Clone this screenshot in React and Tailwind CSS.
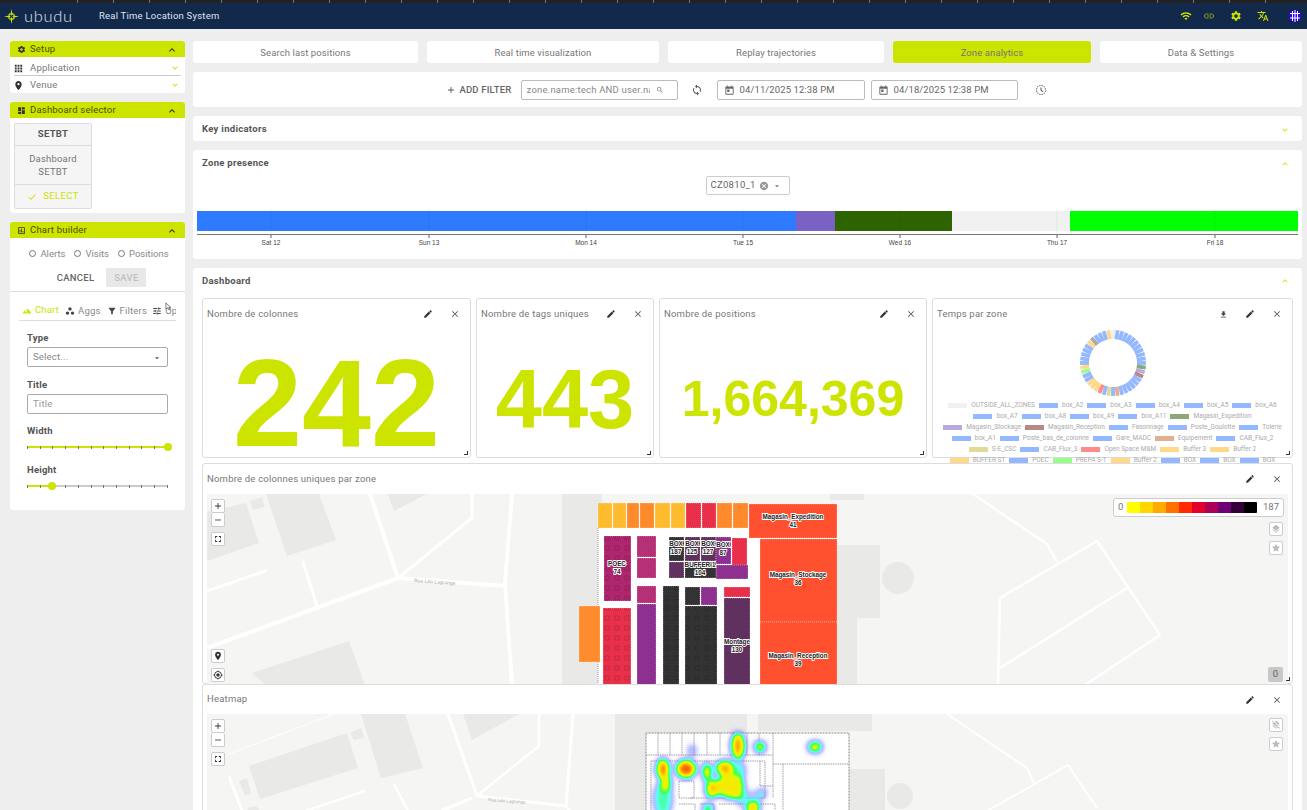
import React from "react";
import {
  MdSettings, MdExpandLess, MdExpandMore, MdApps, MdLocationOn, MdDashboard, MdCheck,
  MdOutlineInsertChart, MdLandscape, MdWorkspaces, MdFilterAlt, MdTune, MdArrowDropDown,
  MdAdd, MdRemove, MdSearch, MdSync, MdToday, MdHistoryToggleOff, MdCancel, MdEdit, MdClose,
  MdFileDownload, MdFullscreen, MdMyLocation, MdLayers, MdLayersClear, MdStar,
  MdWifi, MdLink, MdTranslate,
} from "react-icons/md";

const tabs = [
  { name: "Search last positions", w: "w-[225px]" },
  { name: "Real time visualization", w: "w-[232px]" },
  { name: "Replay trajectories", w: "w-[216px]" },
  { name: "Zone analytics", w: "w-[198px]", active: true },
  { name: "Data & Settings", w: "w-[202px]" },
];

const blue = "#94b8ff";
const legendRows = [
  [["OUTSIDE_ALL_ZONES", "#f0f0f0"], ["box_A2", blue], ["box_A3", blue], ["box_A4", blue], ["box_A5", blue], ["box_A6", blue]],
  [["box_A7", blue], ["box_A8", blue], ["box_A9", blue], ["box_A11", blue], ["Magasin_Expedition", "#8aa878"]],
  [["Magasin_Stockage", "#b8aadc"], ["Magasin_Reception", "#b88888"], ["Fasonnage", blue], ["Poste_Goulotte", blue], ["Tolerie", blue]],
  [["box_A1", blue], ["Poste_bas_de_colonne", blue], ["Gare_MADC", blue], ["Equipement", "#e0b090"], ["CAB_Flux_2", blue]],
  [["S-E_CSC", "#e0dc98"], ["CAB_Flux_3", blue], ["Open Space M&M", "#ff8a8a"], ["Buffer 3", "#ffd88a"], ["Buffer 2", "#ffd88a"]],
  [["BUFFER ST", "#ffd88a"], ["POEC", blue], ["PREPA S-T", "#96ff8c"], ["Buffer 2", "#ffd88a"], ["BOX", blue], ["BOX", blue], ["BOX", blue]],
];

const donutColors = {
  0: "#f0f0f0", 12: "#8aa878", 13: "#b8aadc", 14: "#b88888", 21: "#e0b090", 23: "#e0dc98", 25: "#ff8a8a",
  26: "#ffd88a", 27: "#ffd88a", 28: "#ffd88a", 31: "#96ff8c", 32: "#ffd88a", 38: "#ffd88a", 39: "#aaaaaa", 43: "#ffd88a",
};

const zones = [
  [598, 502, 14, 25, "#ffbb2e"], [613, 502, 13, 25, "#ffbb2e"], [627, 502, 12, 25, "#fe8a2c"], [640, 502, 14, 25, "#fe8a2c"],
  [655, 502, 15, 25, "#ffbb2e"], [671, 502, 14, 25, "#ffbb2e"], [686, 502, 15, 25, "#e8304a"], [702, 502, 14, 25, "#e8304a"],
  [717, 502, 15, 25, "#fe8a2c"], [733, 502, 15, 25, "#fe8a2c"],
  [749, 503, 88, 34, "#ff5030"], [760, 538, 77, 83, "#ff5030"], [760, 621, 77, 63, "#ff5030"],
  [604, 535, 27, 65, "#b0266e"], [637, 535, 19, 21, "#b53074"], [637, 557, 19, 20, "#b53074"],
  [669, 536, 15, 24, "#333333"], [685, 536, 15, 24, "#60305e"], [701, 536, 15, 24, "#60305e"], [716, 536, 15, 27, "#8e3090"],
  [732, 537, 15, 30, "#e8304a"], [716, 564, 32, 14, "#8e3090"], [669, 561, 15, 16, "#60305e"], [685, 561, 31, 16, "#333333"],
  [637, 585, 19, 17, "#b53074"], [637, 603, 19, 81, "#8e3090"], [663, 585, 16, 99, "#333333"], [685, 586, 15, 18, "#333333"],
  [701, 586, 16, 18, "#8e3090"], [685, 605, 32, 79, "#333333"], [724, 586, 26, 10, "#e8304a"], [724, 597, 26, 87, "#60305e"],
  [579, 605, 21, 56, "#ff8c2c"], [603, 607, 28, 77, "#e8304a"],
];

const dottedZones = [
  [604, 535, 27, 65], [603, 607, 28, 77], [663, 585, 16, 99], [685, 605, 32, 79],
];

const zoneLabels = [
  ["Magasin_Expedition", 41, 793, 518], ["Magasin_Stockage", 36, 798, 576], ["Magasin_Reception", 39, 798, 657],
  ["POEC", 74, 617, 565], ["BOX", 187, 676, 545], ["BOX", 125, 692, 545], ["BOX", 127, 708, 545], ["BOX", 87, 723, 546],
  ["BUFFER 1", 104, 700, 566], ["Montage", 130, 737, 643],
];

const blobs = [
  [663, 768, 6, 10, 0.95], [666, 782, 4.5, 8, 0.72], [686, 768, 9.5, 8.5, 1], [692, 750, 3, 6, 0.36], [707, 771, 4, 9, 0.78],
  [712, 788, 6, 9, 0.8], [725, 767, 9, 7, 0.85], [738, 745, 6, 13, 0.9], [760, 746, 5, 5, 0.75], [815, 746, 6.5, 5, 0.75],
  [730, 785, 14, 12, 0.68], [738, 795, 7, 4, 0.4], [762, 792, 3.5, 3.5, 0.5], [753, 807, 6, 6, 0.85], [708, 808, 5, 5, 0.6],
  [663, 798, 9, 18, 0.36], [750, 800, 12, 10, 0.2], [740, 770, 5, 10, 0.35],
];

function Panel({ icon: Icon, title, children }) {
  return (
    <div className="bg-white rounded-[3px]">
      <div className="h-4 bg-[#cde300] rounded-t-[3px] flex items-center px-[7px] pt-px text-[#4a5200]">
        <Icon className="w-[9px] h-[9px] text-[#333]" />
        <span className="ml-1 text-[9.5px] tracking-[0.2px]">{title}</span>
        <MdExpandLess className="ml-auto w-3 h-3 text-[#333]" />
      </div>
      {children}
    </div>
  );
}

function Radio({ label }) {
  return (
    <span className="flex items-center gap-1">
      <span className="w-[7px] h-[7px] rounded-full border border-[#777]" />
      {label}
    </span>
  );
}

function Slider({ percent }) {
  const dots = Array.from({ length: 12 });
  return (
    <div className="relative h-[2px] bg-[#ccc] mt-[9px]">
      <div className="h-full bg-[#cde300]" style={{ width: `${percent}%` }} />
      <div className="absolute inset-0 flex justify-between items-center">
        {dots.map((_, i) => (
          <span key={i} className="w-px h-[3px] bg-[#777]" />
        ))}
      </div>
      <span
        className="absolute top-[-3px] w-2 h-2 -ml-1 rounded-full bg-[#cde300]"
        style={{ left: `${percent}%` }}
      />
    </div>
  );
}

function Sidebar() {
  return (
    <div className="w-[175px] ml-[10px] flex flex-col gap-[9px] shrink-0">
      <Panel icon={MdSettings} title="Setup">
        <div className="mx-1 h-[19px] pt-1 flex items-center border-b border-[#ccc] text-[9.5px] text-[#777] tracking-[0.2px]">
          <MdApps className="w-[11px] h-[11px] text-[#333] ml-[-1px]" />
          <span className="ml-[6px]">Application</span>
          <MdExpandMore className="ml-auto mr-px w-[10px] h-[10px] text-[#cde300]" />
        </div>
        <div className="mx-1 h-[17px] pt-px flex items-center text-[9.5px] text-[#777] tracking-[0.2px]">
          <MdLocationOn className="w-[11px] h-[11px] text-[#333] ml-[-1px]" />
          <span className="ml-[6px]">Venue</span>
          <MdExpandMore className="ml-auto mr-px w-[10px] h-[10px] text-[#cde300]" />
        </div>
      </Panel>

      <Panel icon={MdDashboard} title="Dashboard selector">
        <div className="p-1 pt-[5px]">
          <div className="w-[78px] h-[86px] bg-[#f5f5f5] border border-[#ddd] rounded-[2px] flex flex-col text-center text-[9.5px] text-[#777]">
            <div className="h-[22px] flex items-center justify-center font-bold tracking-[0.3px] text-[#555] border-b border-[#ddd]">
              SETBT
            </div>
            <div className="h-[39px] flex items-center justify-center leading-[13px] border-b border-[#ddd] tracking-[0.2px]">
              Dashboard
              <br />
              SETBT
            </div>
            <div className="flex-1 flex items-center justify-center gap-[6px] text-[#cde300] tracking-[0.4px]">
              <MdCheck className="w-[10px] h-[10px]" />
              SELECT
            </div>
          </div>
        </div>
      </Panel>

      <Panel icon={MdOutlineInsertChart} title="Chart builder">
        <div className="h-[272px]">
          <div className="flex justify-center gap-[9px] pt-[10px] pl-[3px] text-[9.5px] leading-[11px] text-[#888]">
            <Radio label="Alerts" />
            <Radio label="Visits" />
            <Radio label="Positions" />
          </div>
          <div className="flex justify-center items-center gap-3 mt-[9px] h-[19px] pl-2 text-[9.5px] tracking-[0.3px]">
            <span className="text-[#666] font-medium pt-px">CANCEL</span>
            <span className="w-10 h-[19px] pt-px flex items-center justify-center bg-[#e8e8e8] text-[#c0c0c0] font-medium rounded-[1px]">
              SAVE
            </span>
          </div>
          <div className="mt-[4px] border-t border-[#ddd]" />
          <div className="relative mx-[9px] mt-[9px] w-[157px] h-[20px] pt-px border-b border-[#ddd] flex items-center text-[9.5px] text-[#888] tracking-[0.2px] overflow-hidden whitespace-nowrap">
            <span className="w-[43px] h-[20px] flex items-center justify-center gap-[3px] text-[#cde300] border-b border-[#cde300] shrink-0">
              <MdLandscape className="w-[10px] h-[10px]" />
              Chart
            </span>
            <span className="flex items-center gap-[3px] ml-[3px] shrink-0">
              <MdWorkspaces className="w-[10px] h-[10px] text-[#444]" />
              Aggs
            </span>
            <span className="flex items-center gap-[3px] ml-[6px] shrink-0">
              <MdFilterAlt className="w-[10px] h-[10px] text-[#444]" />
              Filters
            </span>
            <span className="flex items-center gap-[3px] ml-[5px] shrink-0">
              <MdTune className="w-[10px] h-[10px] text-[#444]" />
              Options
            </span>
            <svg viewBox="0 0 8 10" className="absolute left-[146px] top-[1px] w-[7px] h-[9px]">
              <path d="M1 1 L1 8 L3 6.500 L4.500 9 L5.500 8.500 L4.300 6 L6.500 6 Z" fill="#fff" stroke="#333" strokeWidth="0.7" />
            </svg>
          </div>
          <div className="mx-[17px] w-[141px] text-[9.5px] text-[#555] tracking-[0.2px]">
            <div className="mt-[10px] h-[13px] font-bold leading-[13px]">Type</div>
            <div className="mt-[3px] h-5 pt-px border border-[#aaa] rounded-[2px] flex items-center pl-[5px] pr-[5px] text-[#888]">
              Select...
              <MdArrowDropDown className="ml-auto w-[10px] h-[10px] text-[#555]" />
            </div>
            <div className="mt-[11px] h-[13px] font-bold leading-[13px]">Title</div>
            <div className="mt-[3px] h-5 pt-px border border-[#aaa] rounded-[2px] flex items-center pl-[5px] text-[#999]">
              Title
            </div>
            <div className="mt-[10px] h-[13px] font-bold leading-[13px]">Width</div>
            <Slider percent={100} />
            <div className="mt-[15px] h-[13px] font-bold leading-[13px]">Height</div>
            <Slider percent={18} />
          </div>
        </div>
      </Panel>
    </div>
  );
}

function DateField({ value, w }) {
  return (
    <div className={`${w} h-5 pt-px border border-[#bbb] rounded-[2px] flex items-center pl-[6px] gap-[5px] text-[9.5px] text-[#666] tracking-[0.1px]`}>
      <MdToday className="w-[11px] h-[11px] text-[#666]" />
      {value}
    </div>
  );
}

function Timeline() {
  const ticks = [["Sat 12", 271], ["Sun 13", 429], ["Mon 14", 586], ["Tue 15", 743], ["Wed 16", 900], ["Thu 17", 1057], ["Fri 18", 1215]];
  return (
    <svg viewBox="193 208 1109 42" className="w-[1109px] h-[42px] block mt-[13px]">
      <rect x="197" y="211" width="599" height="20" fill="#2f7bff" />
      <rect x="796" y="211" width="39" height="20" fill="#7a62c4" />
      <rect x="835" y="211" width="117" height="20" fill="#2e6400" />
      <rect x="952" y="211" width="118" height="20" fill="#f1f1f1" />
      <rect x="1070" y="211" width="228" height="20" fill="#00ff00" />
      {ticks.map(([label, x]) => (
        <g key={label}>
          <line x1={x} x2={x} y1="209" y2="238" stroke="#000" strokeOpacity="0.05" />
          <line x1={x} x2={x} y1="234" y2="238" stroke="#666" />
          <text x={x} y="245" textAnchor="middle" fontSize="6.5" fill="#444" fontFamily="Liberation Sans, sans-serif">
            {label}
          </text>
        </g>
      ))}
      <line x1="197" x2="1298" y1="234.5" y2="234.5" stroke="#777" />
    </svg>
  );
}

function CardHeader({ title, download, h = "h-[30px]" }) {
  return (
    <div className={`${h} flex items-center pl-1 pr-[10px] text-[9.5px] text-[#777] tracking-[0.2px] shrink-0`}>
      <span>{title}</span>
      {download && <MdFileDownload className="ml-auto w-[9px] h-[9px] text-[#444]" />}
      <MdEdit className={`${download ? "ml-[17px]" : "ml-auto"} w-[10px] h-[10px] text-[#333]`} />
      <MdClose className="ml-[17px] w-[10px] h-[10px] text-[#555]" />
    </div>
  );
}

function ResizeHandle() {
  return <span className="absolute right-[2px] bottom-[2px] w-[4px] h-[4px] border-r border-b border-[#333]" />;
}

function NumberCard({ title, value, w, size }) {
  return (
    <div className={`${w} h-[160px] relative bg-white border border-[#ddd] rounded-[3px] flex flex-col`}>
      <CardHeader title={title} />
      <div className={`flex-1 flex items-center justify-center pt-3 leading-none font-bold text-[#cde300] [font-family:'Liberation_Sans',sans-serif] ${size}`}>
        {value}
      </div>
      <ResizeHandle />
    </div>
  );
}

function DonutCard() {
  const n = 44;
  return (
    <div className="w-[361px] h-[160px] relative bg-white border border-[#ddd] rounded-[3px] flex flex-col">
      <CardHeader title="Temps par zone" download />
      <svg viewBox="0 0 70 70" className="w-[70px] h-[70px] mx-auto mt-[-1px] shrink-0">
        {Array.from({ length: n }).map((_, i) => (
          <rect
            key={i}
            x="33.100"
            y="2"
            width="3.800"
            height="9"
            fill={donutColors[i] || blue}
            transform={`rotate(${(i * 360) / n} 35 35)`}
          />
        ))}
      </svg>
      <div className="mt-[2px] flex flex-col items-center text-[6.5px] leading-[11px] text-[#aaa] whitespace-nowrap">
        {legendRows.map((row, i) => (
          <div key={i} className="h-[11px] flex items-center gap-[4px]">
            {row.map(([label, color], j) => (
              <span key={j} className="flex items-center gap-[4px]">
                <span className="w-[19px] h-[5px]" style={{ backgroundColor: color }} />
                {label}
              </span>
            ))}
          </div>
        ))}
      </div>
      <ResizeHandle />
    </div>
  );
}

function MapButton({ icon: Icon, className = "" }) {
  return (
    <span className={`w-[14px] h-[14px] bg-white border border-[#ccc] rounded-[2px] flex items-center justify-center ${className}`}>
      <Icon className="w-[10px] h-[10px]" />
    </span>
  );
}

function HeatLegend() {
  const colors = ["#ffff00", "#ffd600", "#ffac00", "#ff7200", "#ff2a00", "#e4002a", "#aa0058", "#700078", "#330038", "#000000"];
  return (
    <div className="absolute top-1 right-[4px] w-[171px] h-[19px] bg-white border border-[#ccc] rounded-[3px] flex items-center px-[4px] text-[9.5px] text-[#777]">
      <span className="w-[9px]">0</span>
      <span className="flex rounded-[1px] overflow-hidden">
        {colors.map((c) => (
          <span key={c} className="w-[13px] h-[11px]" style={{ backgroundColor: c }} />
        ))}
      </span>
      <span className="ml-auto">187</span>
    </div>
  );
}

function ZoneMapSvg() {
  return (
    <svg viewBox="207 493 1081 191" className="w-full h-full block">
      <defs>
        <pattern id="seats" width="10" height="10" patternUnits="userSpaceOnUse" patternTransform="translate(2 2)">
          <rect x="3" y="3" width="4" height="4" fill="none" stroke="#000" strokeOpacity="0.22" strokeWidth="0.7" />
        </pattern>
      </defs>
      <rect x="207" y="493" width="1081" height="191" fill="#f5f5f3" />
      <g fill="#e9e9e7">
        <polygon points="207,511 246,502 259,542 207,560" />
        <polygon points="250,500 262,496 265,506 253,509" />
        <polygon points="266,493 319,493 336,539 287,555" />
        <polygon points="388,493 427,493 394,510" />
        <polygon points="252,672 349,640 365,684 265,684" />
        <rect x="562" y="493" width="40" height="191" />
        <rect x="830" y="493" width="34" height="6" />
        <rect x="837" y="544" width="43" height="73" />
        <rect x="837" y="617" width="20" height="67" />
        <circle cx="898" cy="577" r="16" />
      </g>
      <g fill="none" stroke="#fff" strokeLinejoin="round">
        <path d="M370 493 L398 577" strokeWidth="4" />
        <path d="M398 577 L472 517 L472 493" strokeWidth="3" />
        <path d="M512 493 L505 583 L512 684" strokeWidth="4" />
        <path d="M398 577 L505 585" strokeWidth="4" />
        <path d="M207 647 L398 577" strokeWidth="4" />
        <path d="M207 590 L265 570" strokeWidth="3" strokeLinecap="round" />
        <path d="M303 561 L317 605" strokeWidth="3" strokeLinecap="round" />
        <path d="M973 493 L1047 543 L1057 561" strokeWidth="2.5" />
        <path d="M998 684 L1000 597 L1097 540 L1160 634 L1085 684" strokeWidth="2.5" />
        <path d="M1127 587 L1000 667" strokeWidth="2.5" />
      </g>
      <text x="414" y="581" fontSize="5" fill="#aaa" transform="rotate(4 414 581)" fontFamily="Liberation Sans, sans-serif">
        Rue Léo Lagrange
      </text>
      <rect x="598" y="527" width="162" height="157" fill="#fff" />
      <path d="M598 527 V684" stroke="#999" strokeWidth="1" strokeDasharray="1 1" />
      {zones.map(([x, y, w, h, fill], i) => (
        <rect key={i} x={x} y={y} width={w} height={h} fill={fill} stroke="#fff" strokeOpacity="0.7" strokeWidth="0.6" strokeDasharray="1 1" />
      ))}
      {dottedZones.map(([x, y, w, h], i) => (
        <rect key={i} x={x} y={y} width={w} height={h} fill="url(#seats)" />
      ))}
      {zoneLabels.map(([name, count, x, y], i) => (
        <text
          key={i}
          x={x}
          y={y}
          textAnchor="middle"
          fontSize="6.300"
          fontWeight="700"
          fill="#222"
          stroke="#fff"
          strokeWidth="1.8"
          paintOrder="stroke"
          fontFamily="Liberation Sans, sans-serif"
        >
          <tspan x={x}>{name}</tspan>
          <tspan x={x} dy="7.500">{count}</tspan>
        </text>
      ))}
    </svg>
  );
}

function HeatMapSvg() {
  const topCells = [658, 670, 682, 694, 707, 720, 733, 747, 759];
  return (
    <svg viewBox="207 713 1081 97" className="w-full h-full block">
      <defs>
        <filter id="heat" x="600" y="700" width="300" height="150" filterUnits="userSpaceOnUse" colorInterpolationFilters="sRGB">
          <feGaussianBlur stdDeviation="3" />
          <feColorMatrix values="0 0 0 1 0  0 0 0 1 0  0 0 0 1 0  0 0 0 1 0" />
          <feComponentTransfer>
            <feFuncR type="table" tableValues="0.4 0.45 0.2 0.2 0.85 1 1 1" />
            <feFuncG type="table" tableValues="0.4 0.45 1 1 1 0.9 0.65 0.35" />
            <feFuncB type="table" tableValues="1 1 1 0.3 0 0 0 0" />
            <feFuncA type="table" tableValues="0 0.45 0.8 0.95 1 1 1 1" />
          </feComponentTransfer>
        </filter>
      </defs>
      <rect x="207" y="713" width="1081" height="97" fill="#f5f5f3" />
      <g fill="#e9e9e7">
        <polygon points="249,765 347,732 358,767 260,798" />
        <polygon points="361,713 405,713 423,767 381,777" />
        <polygon points="350,732 361,727 364,737 354,739" />
        <polygon points="463,713 519,713 472,739" />
        <polygon points="239,780 247,777 251,792 245,795" />
        <polygon points="247,807 256,805 260,810 249,810" />
        <rect x="615" y="713" width="31" height="97" />
        <rect x="646" y="713" width="101" height="19" />
        <rect x="758" y="713" width="114" height="17" />
        <rect x="849" y="768" width="36" height="42" />
        <circle cx="900" cy="795" r="13" />
      </g>
      <g fill="none" stroke="#fff" strokeLinejoin="round">
        <path d="M448 713 L477 795" strokeWidth="3" />
        <path d="M477 795 L539 745 L539 713" strokeWidth="2.5" />
        <path d="M573 713 L566 805 L570 810" strokeWidth="3" />
        <path d="M477 795 L566 805" strokeWidth="3" />
        <path d="M472 797 L441 810" strokeWidth="3" />
        <path d="M229 775 L242 810" strokeWidth="2.5" />
        <path d="M229 753 L334 713" strokeWidth="1" />
        <path d="M305 810 L365 790" strokeWidth="2.5" />
        <path d="M394 783 L408 810" strokeWidth="2.5" />
        <path d="M947 713 L1027 767 L1034 782" strokeWidth="2" />
        <path d="M987 810 L1068 764 L1097 807" strokeWidth="2" />
      </g>
      <text x="488" y="800" fontSize="4.500" fill="#aaa" transform="rotate(4 488 800)" fontFamily="Liberation Sans, sans-serif">
        Rue Léo Lagrange
      </text>
      <rect x="646" y="732" width="203" height="80" fill="#fff" stroke="#888" strokeDasharray="1 0.5" />
      <g fill="none" stroke="#888" strokeWidth="0.8" strokeDasharray="1.5 0.8">
        {topCells.map((x) => (
          <path key={x} d={`M${x} 732 V754`} />
        ))}
        <path d="M646 754 H773" />
        <path d="M773 732 V797" />
        <path d="M773 763 H849" />
        <path d="M783 763 V810" />
        <path d="M651 760 H765 V797 H690" />
        <path d="M651 760 V810" />
        <path d="M679 780 H694 V797 H679 Z" />
        <path d="M679 803 H695 V812" />
        <path d="M700 803 H714 V812" />
        <path d="M719 803 H775 V812" />
        <path d="M760 760 V785 H773" />
      </g>
      <g filter="url(#heat)">
        {blobs.map(([cx, cy, rx, ry, o], i) => (
          <ellipse key={i} cx={cx} cy={cy} rx={rx} ry={ry} fill="#000" fillOpacity={o} />
        ))}
      </g>
    </svg>
  );
}

export default function App() {
  const ticks = Array.from({ length: 34 });
  return (
    <div className="h-screen overflow-hidden bg-[#eeeeee] [font-family:Roboto,sans-serif]">
      {/* top bar */}
      <div className="h-[3px] bg-[#222] flex pl-[77px]">
        {ticks.map((_, i) => (
          <span key={i} className="w-9 shrink-0 border-l border-[#777]" />
        ))}
      </div>
      <div className="h-[26px] bg-[#13294b] flex items-center text-white">
        <svg viewBox="0 0 18 18" className="w-[15px] h-[15px] ml-[4px]">
          <path d="M9 0 L10.200 6.500 L9 8 L7.800 6.500 Z M9 18 L7.800 11.500 L9 10 L10.200 11.500 Z M0 9 L6.500 7.800 L8 9 L6.500 10.200 Z M18 9 L11.500 10.200 L10 9 L11.500 7.800 Z" fill="#cde300" />
          <path d="M6 6 H12 V12 H6 Z" fill="none" stroke="#cde300" strokeWidth="1.200" />
        </svg>
        <span className="ml-[5px] text-[16.5px] tracking-[0.7px] text-[#dfe5ee] font-light [font-family:Lato,sans-serif]">ubudu</span>
        <span className="ml-[26px] text-[9.5px] tracking-[0.23px] text-[#dfe5ee]">Real Time Location System</span>
        <div className="ml-auto flex items-center text-[#cde300]">
          <MdWifi className="w-3 h-3" />
          <MdLink className="w-3 h-3 ml-[11px] text-[#7f9a14]" />
          <MdSettings className="w-3 h-3 ml-[15px]" />
          <MdTranslate className="w-3 h-3 ml-[15px]" />
          <svg viewBox="0 0 12 12" className="w-3 h-3 ml-[20px] mr-[6px]">
            <circle cx="6" cy="6" r="6" fill="#2a00ff" />
            <path d="M3.500 1 V11 M8.500 1 V11 M1 3.500 H11 M1 8 H11 M6 0 V12" stroke="#fff" strokeWidth="1" />
          </svg>
        </div>
      </div>

      <div className="flex gap-2 pt-3">
        <Sidebar />

        <div className="w-[1109px] flex flex-col gap-[9px] shrink-0">
          <div className="flex justify-between">
            {tabs.map((tab) => (
              <div
                key={tab.name}
                className={`${tab.w} h-[22px] pt-[3px] rounded-[3px] flex items-center justify-center text-[9.5px] tracking-[0.1px] text-[#777] ${tab.active ? "bg-[#cde300]" : "bg-white"}`}
              >
                {tab.name}
              </div>
            ))}
          </div>

          <div className="h-[35px] bg-white rounded-[3px] flex items-center justify-center">
            <MdAdd className="w-[10px] h-[10px] text-[#555]" />
            <span className="ml-[3px] pt-px text-[9.5px] tracking-[0.2px] text-[#666] font-medium">ADD FILTER</span>
            <div className="ml-[9px] w-[157px] h-5 pt-px border border-[#bbb] rounded-[2px] flex items-center pl-[5px] text-[9.5px] text-[#888] tracking-[0.2px] whitespace-nowrap">
              <span className="w-[123px] overflow-hidden">zone.name:tech AND user.name</span>
              <MdSearch className="ml-[6px] w-[8px] h-[8px] text-[#777]" />
            </div>
            <MdSync className="ml-[13px] w-3 h-3 text-[#555]" />
            <span className="ml-[14px]">
              <DateField value="04/11/2025 12:38 PM" w="w-[148px]" />
            </span>
            <span className="ml-[6px]">
              <DateField value="04/18/2025 12:38 PM" w="w-[147px]" />
            </span>
            <MdHistoryToggleOff className="ml-[17px] mr-[2px] w-3 h-3 text-[#555]" />
          </div>

          <div className="h-[25px] pt-[2px] bg-white rounded-[3px] flex items-center px-[9px] text-[9.5px] font-bold text-[#555] tracking-[0.3px]">
            Key indicators
            <MdExpandMore className="ml-auto mr-[3px] w-[10px] h-[10px] text-[#cde300]" />
          </div>

          <div className="h-[109px] bg-white rounded-[3px]">
            <div className="h-[25px] pt-[2px] flex items-center px-[9px] text-[9.5px] font-bold text-[#555] tracking-[0.3px]">
              Zone presence
              <MdExpandLess className="ml-auto mr-[3px] w-[10px] h-[10px] text-[#cde300]" />
            </div>
            <div className="mx-auto w-[84px] h-[19px] mt-px border border-[#ccc] rounded-[2px] flex items-center pl-[4px] text-[9.5px] text-[#666] tracking-[0.3px]">
              CZ0810_1
              <MdCancel className="ml-[3px] w-[10px] h-[10px] text-[#999]" />
              <MdArrowDropDown className="ml-[3px] w-[10px] h-[10px] text-[#777]" />
            </div>
            <Timeline />
          </div>

          <div className="flex-1 h-[542px] bg-white rounded-t-[3px]">
            <div className="h-[30px] pb-1 flex items-center px-[9px] pr-[12px] text-[9.5px] font-bold text-[#555] tracking-[0.3px]">
              Dashboard
              <MdExpandLess className="ml-auto w-[10px] h-[10px] text-[#cde300]" />
            </div>
            <div className="mx-[9px] w-[1091px] flex flex-col">
              <div className="flex gap-[5px]">
                <NumberCard title="Nombre de colonnes" value="242" w="w-[269px]" size="text-[124px]" />
                <NumberCard title="Nombre de tags uniques" value="443" w="w-[178px]" size="text-[83px]" />
                <NumberCard title="Nombre de positions" value="1,664,369" w="w-[268px]" size="text-[50px]" />
                <DonutCard />
              </div>

              <div className="relative mt-[5px] h-[221px] bg-white border border-[#ddd] rounded-[3px] flex flex-col">
                <CardHeader title="Nombre de colonnes uniques par zone" />
                <div className="relative mx-1 flex-1">
                  <ZoneMapSvg />
                  <div className="absolute top-[5px] left-[4px] flex flex-col text-[#333]">
                    <MapButton icon={MdAdd} />
                    <MapButton icon={MdRemove} className="border-t-0" />
                    <MapButton icon={MdFullscreen} className="mt-[5px]" />
                  </div>
                  <div className="absolute bottom-[3px] left-[4px] flex flex-col gap-[5px] text-[#333]">
                    <MapButton icon={MdLocationOn} />
                    <MapButton icon={MdMyLocation} />
                  </div>
                  <HeatLegend />
                  <div className="absolute top-[28px] right-[5px] flex flex-col gap-[5px] text-[#bbb]">
                    <MapButton icon={MdLayers} />
                    <MapButton icon={MdStar} />
                  </div>
                  <span className="absolute bottom-[3px] right-[5px] w-[15px] h-[15px] bg-[#c8c8c8] rounded-[2px] flex items-center justify-center text-[9.5px] text-[#666]">
                    0
                  </span>
                </div>
                <ResizeHandle />
              </div>

              <div className="relative h-[300px] bg-white border border-[#ddd] rounded-[3px] flex flex-col">
                <CardHeader title="Heatmap" h="h-[29px]" />
                <div className="relative mx-1 h-[97px]">
                  <HeatMapSvg />
                  <div className="absolute top-[5px] left-[4px] flex flex-col text-[#333]">
                    <MapButton icon={MdAdd} />
                    <MapButton icon={MdRemove} className="border-t-0" />
                    <MapButton icon={MdFullscreen} className="mt-[5px]" />
                  </div>
                  <div className="absolute top-[4px] right-[5px] flex flex-col gap-[5px] text-[#bbb]">
                    <MapButton icon={MdLayersClear} />
                    <MapButton icon={MdStar} />
                  </div>
                </div>
              </div>
            </div>
          </div>
        </div>
      </div>
    </div>
  );
}
